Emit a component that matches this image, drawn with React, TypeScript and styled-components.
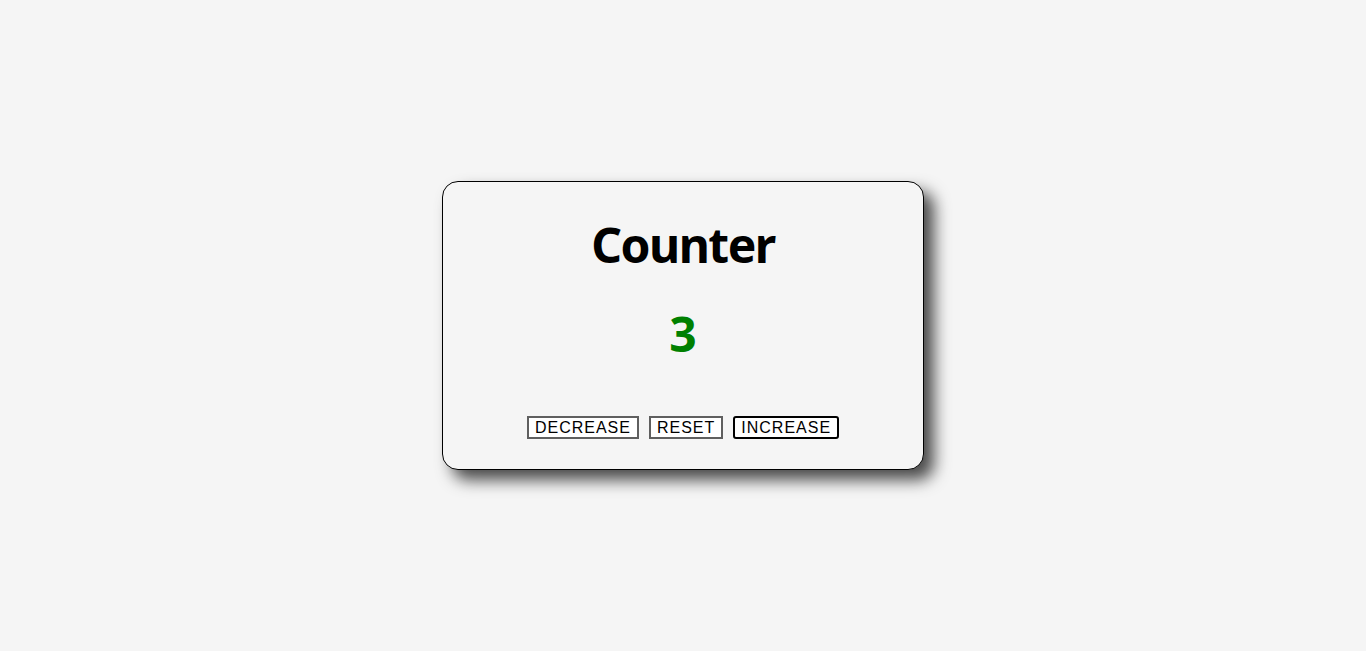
import React, { useState } from 'react'
import styled, { createGlobalStyle } from 'styled-components'

const GlobalStyle = createGlobalStyle`
  * {
    box-sizing: border-box;
  }
  body {
    margin: 0;
    background: #f5f5f5;
    font-family: "Comic Sans MS", "Noto Sans", sans-serif;
  }
`

const Page = styled.main`
  min-height: 100vh;
  display: flex;
  align-items: center;
  justify-content: center;
`

const Card = styled.section`
  width: 482px;
  height: 289px;
  padding-top: 34px;
  border: 1px solid #000;
  border-radius: 16px;
  background: #f5f5f5;
  box-shadow: 10px 10px 16px rgba(0, 0, 0, 0.7);
  display: flex;
  flex-direction: column;
  align-items: center;
`

const Title = styled.h1`
  margin: 0;
  font-size: 48px;
  font-weight: 700;
  letter-spacing: -1.5px;
  line-height: 1.2;
  color: #000;
`

const Value = styled.span<{ $tone: string }>`
  margin-top: 31px;
  font-size: 48px;
  font-weight: 700;
  line-height: 1.2;
  color: ${(p) => p.$tone};
`

const Buttons = styled.div`
  margin-top: 54px;
  display: flex;
  gap: 10px;
`

const Button = styled.button<{ $active?: boolean }>`
  height: 23px;
  padding: 0 6px;
  background: #fff;
  color: #000;
  font-family: "Liberation Sans", Arial, sans-serif;
  font-size: 16px;
  letter-spacing: 1px;
  line-height: 1;
  cursor: pointer;
  border: 2px solid ${(p) => (p.$active ? '#000' : '#5f5f5f')};
  border-radius: ${(p) => (p.$active ? '3px' : '0')};
`

export default function App() {
  const [count, setCount] = useState(3)
  const tone = count > 0 ? '#008000' : count < 0 ? '#d00000' : '#222'

  return (
    <>
      <GlobalStyle />
      <Page>
        <Card>
          <Title>Counter</Title>
          <Value $tone={tone}>{count}</Value>
          <Buttons>
            <Button onClick={() => setCount(count - 1)}>DECREASE</Button>
            <Button onClick={() => setCount(0)}>RESET</Button>
            <Button $active onClick={() => setCount(count + 1)}>
              INCREASE
            </Button>
          </Buttons>
        </Card>
      </Page>
    </>
  )
}
